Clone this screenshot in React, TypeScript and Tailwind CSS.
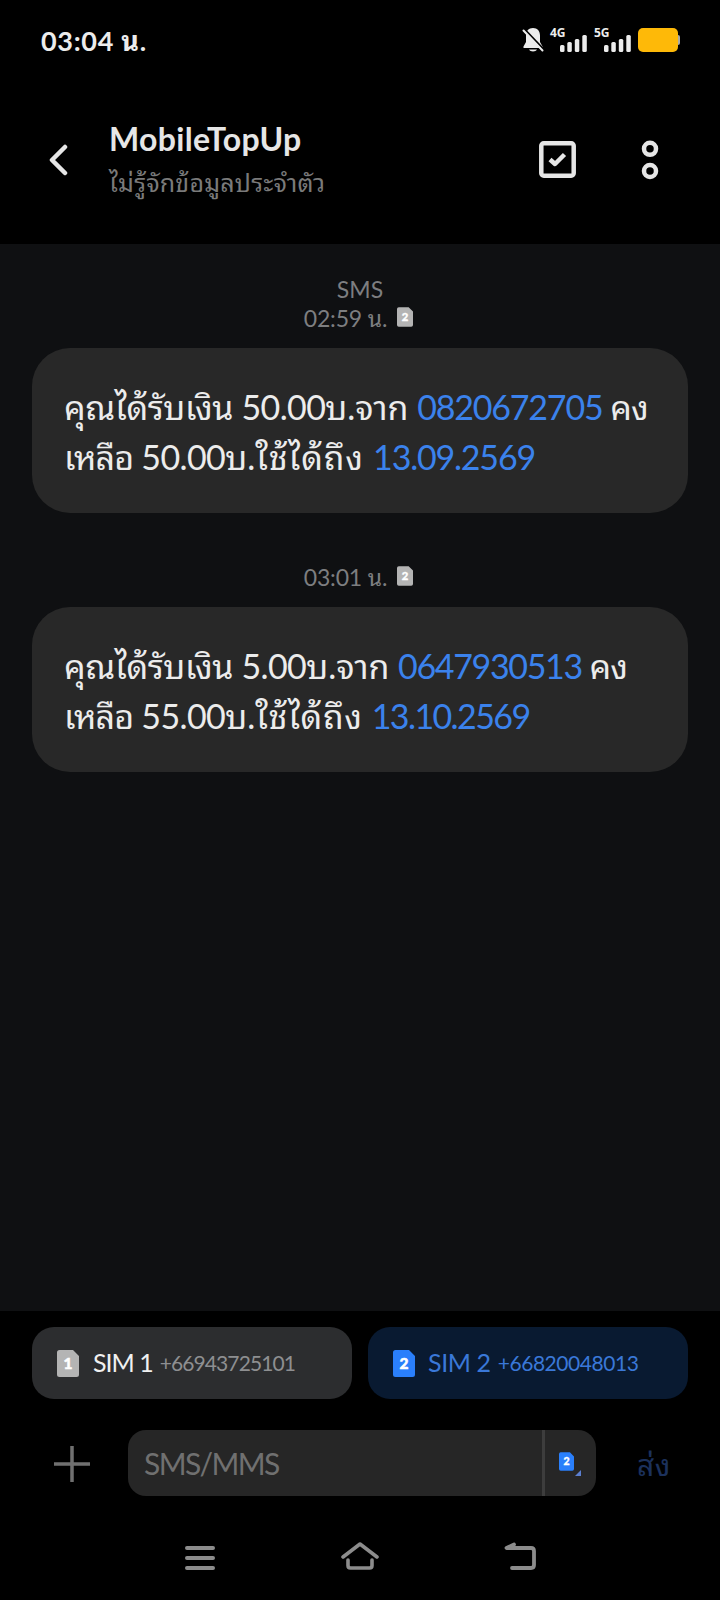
import type { ReactNode } from "react";

interface Message {
  label?: string;
  time: string;
  body: ReactNode;
}

function SimIcon({ slot, className = "", fill }: { slot: number; className?: string; fill: string }) {
  return (
    <svg viewBox="0 0 22 27" className={`shrink-0 ${className}`}>
      <path d="M2.500 0H16l6 6V24.500a2.500 2.500 0 0 1-2.500 2.500h-17A2.500 2.500 0 0 1 0 24.500V2.500A2.500 2.500 0 0 1 2.500 0Z" fill={fill} />
      <text x="11" y="19" textAnchor="middle" fontFamily="Lato, sans-serif" fontWeight="900" fontSize="15.500" fill="#fff" stroke="#fff" strokeWidth="0.500">
        {slot}
      </text>
    </svg>
  );
}

function Signal({ label }: { label: string }) {
  return (
    <div className="flex h-6 w-[37px]">
      <span className="-mt-px w-[10px] font-['Noto_Sans'] text-[12px] leading-3 font-bold">{label}</span>
      <svg viewBox="0 0 27 24" className="h-6 w-[27px] shrink-0" fill="#ececec">
        <rect x="0" y="17" width="4.500" height="7" rx="1.500" />
        <rect x="7.300" y="14" width="4.500" height="10" rx="1.500" />
        <rect x="14.800" y="11" width="4.500" height="13" rx="1.500" />
        <rect x="22.300" y="7" width="4.500" height="17" rx="1.500" />
      </svg>
    </div>
  );
}

const messages: Message[] = [
  {
    label: "SMS",
    time: "02:59 น.",
    body: (
      <>
        <p>
          <span className="tracking-[-0.4px]">คุณได้รับเงิน </span>
          <span className="tracking-[-0.6px]">50.00</span>บ.จาก{" "}
          <span className="tracking-[-1.2px] text-[#3b82ec]">0820672705</span>
          <span className="tracking-[-0.9px]"> คง</span>
        </p>
        <p>
          <span className="tracking-[-0.8px]">เหลือ </span>
          <span className="tracking-[-0.6px]">50.00</span>บ.<span className="tracking-[0.8px]">ใช้ได้ถึง </span>
          <span className="tracking-[-1.2px] text-[#3b82ec]">13.09.2569</span>
        </p>
      </>
    ),
  },
  {
    time: "03:01 น.",
    body: (
      <>
        <p>
          <span className="tracking-[-0.4px]">คุณได้รับเงิน </span>
          <span className="tracking-[-0.6px]">5.00</span>บ.จาก{" "}
          <span className="tracking-[-1.35px] text-[#3b82ec]">0647930513</span>
          <span className="tracking-[-0.9px]"> คง</span>
        </p>
        <p>
          <span className="tracking-[-0.8px]">เหลือ </span>
          <span className="tracking-[-0.6px]">55.00</span>บ.<span className="tracking-[0.6px]">ใช้ได้ถึง </span>
          <span className="tracking-[-1.6px] text-[#3b82ec]">13.10.2569</span>
        </p>
      </>
    ),
  },
];

export default function App() {
  return (
    <div className="flex h-[1600px] w-[720px] flex-col overflow-hidden bg-black font-['Lato','Noto_Sans_Thai_Looped','Noto_Looped_Thai','Loma','Waree','Garuda','Umpush','Laksaman','Tlwg_Typo','FreeSans','FreeSerif','Droid_Sans_Thai',sans-serif] text-[#ececec]">
      {/* Status bar */}
      <div className="flex h-20 shrink-0 items-center justify-between pr-10 pl-[41px]">
        <span className="mt-px text-[27px] leading-8 font-bold tracking-[0.7px]">03:04 น.</span>
        <div className="flex h-6 items-center">
          <svg viewBox="0 0 22 24" className="mr-[6px] h-6 w-[22px]">
            <path d="M11 0C6.500 0 4 3 4 7.500V14l-2.500 4.500c-.4 1 .1 1.500 1 1.500h17c.9 0 1.400-.6 1-1.500L18 14V7.500C18 3 15.500 0 11 0Z" fill="#ececec" />
            <path d="M7 21.500h8c-1 2.500-7 2.500-8 0Z" fill="#ececec" />
            <path d="M2 .8 22 21.600" stroke="#000" strokeWidth="2" />
            <path d="M1.500 2.500 20.500 22.500" stroke="#ececec" strokeWidth="2" strokeLinecap="round" />
          </svg>
          <Signal label="4G" />
          <div className="w-[7px]" />
          <Signal label="5G" />
          <svg viewBox="0 0 42 24" className="ml-[7px] h-6 w-[42px]">
            <rect x="36" y="7" width="6" height="10" rx="2" fill="#a9a9a9" />
            <rect x="0" y="0" width="40" height="24" rx="5" fill="#feb908" />
          </svg>
        </div>
      </div>

      {/* Header */}
      <header className="flex h-[164px] shrink-0 items-center pb-[5px] pl-12">
        <svg viewBox="0 0 20 32" className="h-8 w-5" fill="none" stroke="#e6e6e6" strokeWidth="4.500" strokeLinecap="round" strokeLinejoin="round">
          <path d="M17 3 4 16l13 13" />
        </svg>
        <div className="mt-[2px] ml-[41px] w-[430px]">
          <h1 className="text-[32px] leading-[38px] font-bold tracking-[0.35px] text-[#e6e6e6]">MobileTopUp</h1>
          <p className="mt-[5px] text-[25px] leading-[38px] tracking-[0.2px] text-[#7a7a7a]">ไม่รู้จักข้อมูลประจำตัว</p>
        </div>
        <svg viewBox="0 0 37 37" className="h-[37px] w-[37px]" fill="none" stroke="#e6e6e6" strokeWidth="4.500">
          <rect x="2.300" y="2.300" width="32.400" height="32.400" rx="2.500" />
          <path d="m11 18.500 5 4.500 9.500-9.500" strokeLinejoin="round" />
        </svg>
        <svg viewBox="0 0 18 40" className="ml-[65px] h-10 w-[18px]" fill="none" stroke="#e6e6e6" strokeWidth="4.500">
          <circle cx="9" cy="8.800" r="6" />
          <circle cx="9" cy="31" r="6" />
        </svg>
      </header>

      {/* Conversation */}
      <main className="flex h-[1067px] shrink-0 flex-col bg-[#0f1012] px-8 pt-[30px]">
        {messages.map((message) => (
          <section key={message.time} className="mb-[50px]">
            {message.label && (
              <div className="h-[30px] text-center text-[23px] leading-[30px] text-[#7d7e80]">{message.label}</div>
            )}
            <div className="flex h-[29px] items-center justify-center pr-[3px] text-[23px] leading-[29px] text-[#7d7e80]">
              <span className="tracking-[-0.15px]">{message.time}</span>
              <SimIcon slot={2} fill="#b4b4b4" className="mb-[3px] ml-[10px] h-5 w-4" />
            </div>
            <div className="mt-[15px] h-[165px] rounded-[38px] bg-[#282828] px-8 pt-[34px] text-[34px] leading-[50px] whitespace-nowrap">
              {message.body}
            </div>
          </section>
        ))}
      </main>

      {/* SIM picker */}
      <div className="mt-4 flex shrink-0 gap-4 px-8">
        <button className="flex h-[72px] w-80 items-center rounded-[22px] bg-[#2c2d2f] pl-[25px]">
          <SimIcon slot={1} fill="#b4b4b4" className="h-[27px] w-[22px]" />
          <span className="ml-[14px] text-[25px] tracking-[-1px] text-[#f0f0f0]">SIM 1</span>
          <span className="ml-[7px] text-[21px] tracking-[-0.9px] text-[#8e8f91]">+66943725101</span>
        </button>
        <button className="flex h-[72px] w-80 items-center rounded-[22px] bg-[#091a31] pl-[25px]">
          <SimIcon slot={2} fill="#2a7ffb" className="h-[27px] w-[22px]" />
          <span className="ml-[13px] text-[25px] tracking-[-0.4px] text-[#3a78d8]">SIM 2</span>
          <span className="ml-[7px] text-[21px] tracking-[-0.45px] text-[#3a78d8]">+66820048013</span>
        </button>
      </div>

      {/* Composer */}
      <div className="mt-[31px] flex h-[66px] shrink-0 items-center pl-[54px]">
        <svg viewBox="0 0 36 36" className="mt-[2px] h-9 w-9" stroke="#707070" strokeWidth="3.500">
          <path d="M0 18h36M18 0v36" />
        </svg>
        <div className="ml-[38px] flex h-[66px] w-[468px] items-center rounded-[18px] bg-[#262626]">
          <span className="w-[414px] pl-4 text-[30px] tracking-[-1.6px] text-[#707070]">SMS/MMS</span>
          <div className="h-full w-[3px] bg-[#3d3d3d]" />
          <SimIcon slot={2} fill="#2a7ffb" className="mb-1 ml-[14px] h-[19px] w-[15px]" />
          <svg viewBox="0 0 6 6" className="mt-[19px] ml-px h-[6px] w-[6px]">
            <path d="M6 0v6H0Z" fill="#5b7fd0" />
          </svg>
        </div>
        <span className="mt-[2px] ml-[41px] text-[30px] tracking-[0.4px] text-[#1c315c]">ส่ง</span>
      </div>

      {/* Navigation bar */}
      <nav className="mt-[46px] flex shrink-0 items-center pl-[185px]">
        <svg viewBox="0 0 30 30" className="h-[30px] w-[30px]" stroke="#8c8c8c" strokeWidth="4" strokeLinecap="round">
          <path d="M2 6h26M2 16h26M2 26h26" />
        </svg>
        <svg viewBox="0 0 38 30" className="ml-[126px] h-[30px] w-[38px]" fill="none" stroke="#8c8c8c" strokeWidth="3.600" strokeLinecap="round" strokeLinejoin="round">
          <path d="M2 15 19 2l17 13" />
          <path d="M7 18v5.500Q7 26 9.500 26h19q2.500 0 2.500-2.500V18" />
        </svg>
        <svg viewBox="0 0 32 30" className="ml-[125px] h-[30px] w-8" fill="none" stroke="#8c8c8c" strokeWidth="3.800" strokeLinecap="round" strokeLinejoin="round">
          <path d="M10 2.500 2.500 6H27q3 0 3 3v14q0 3-3 3H8" />
        </svg>
      </nav>
    </div>
  );
}
